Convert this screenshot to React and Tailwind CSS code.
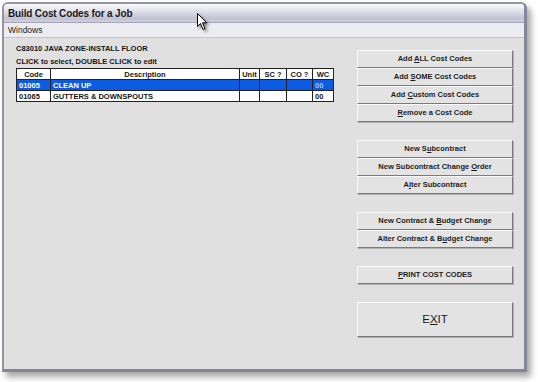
const sans = "font-['Liberation_Sans',Arial,sans-serif]";

function Btn({ children, tall }) {
  return (
    <button
      type="button"
      className={`flex w-full items-center justify-center border border-t-[#fafafa] border-l-[#fafafa] border-b-[#7a7a7a] border-r-[#7a7a7a] bg-[#e3e3e3] text-[#1c1c1c] shadow-[1px_1px_0_#b0b0b0] ${tall ? "h-[35px] text-[11.5px]" : "h-[18px] text-[7.5px] font-bold"}`}
    >
      <span>{children}</span>
    </button>
  );
}

const cols = [
  { label: "Code", w: "w-[34px]" },
  { label: "Description", w: "w-[189px]" },
  { label: "Unit", w: "w-[20px]" },
  { label: "SC ?", w: "w-[27px]" },
  { label: "CO ?", w: "w-[26px]" },
  { label: "WC", w: "w-[21px]" },
];

const rows = [
  { code: "01005", desc: "CLEAN UP", wc: "00", sel: true },
  { code: "01065", desc: "GUTTERS & DOWNSPOUTS", wc: "00", sel: false },
];

export default function App() {
  return (
    <div className={`relative h-[382px] w-[538px] overflow-hidden bg-white pl-[2px] pt-[2px] ${sans}`}>
      <div className="flex h-[370px] w-[525px] flex-col overflow-hidden rounded-t-[6px] border-2 border-r-[3px] border-b-[3px] border-[#9494a6] border-r-[#86869a] border-b-[#86869a] shadow-[4px_5px_6px_rgba(0,0,0,0.35)]">
        <div className="flex h-[18px] items-center bg-[linear-gradient(to_bottom,#fbfbfd,#dcdce6_45%,#c2c2d2_80%,#cfcfdc)] px-[4px] text-[10px] font-bold tracking-[-0.15px] text-[#1a1a24]">
          Build Cost Codes for a Job
        </div>
        <div className="flex h-[16px] items-center border-t border-b border-t-[#a4a4b6] border-b-[#c4c4ce] bg-[#ededf1] px-[4px] text-[8.5px] text-[#202020]">
          Windows
        </div>
        <div className="flex flex-1 bg-[#e0e0e0]">
          <div className="w-[353px] pl-[12px] pt-[4px]">
            <p className="text-[7.5px] font-bold leading-[13px] text-[#151515]">C83010 JAVA ZONE-INSTALL FLOOR</p>
            <p className="text-[7.5px] font-bold leading-[13px] text-[#151515]">CLICK to select, DOUBLE CLICK to edit</p>
            <table className="border-collapse text-[7.5px] font-bold">
              <thead>
                <tr className="h-[11px]">
                  {cols.map((c) => (
                    <th key={c.label} className={`${c.w} border border-[#222] bg-white p-0 text-center leading-[9px] text-[#151515]`}>
                      {c.label}
                    </th>
                  ))}
                </tr>
              </thead>
              <tbody>
                {rows.map((r) => (
                  <tr key={r.code} className={`h-[11px] ${r.sel ? "bg-[#0b5be3] text-white" : "bg-white text-[#151515]"}`}>
                    <td className="border border-[#222] px-[2px] py-0 leading-[9px]">{r.code}</td>
                    <td className="border border-[#222] px-[2px] py-0 leading-[9px]">{r.desc}</td>
                    <td className="border border-[#222] p-0"></td>
                    <td className="border border-[#222] p-0"></td>
                    <td className="border border-[#222] p-0"></td>
                    <td className={`border border-[#222] px-[2px] py-0 leading-[9px] ${r.sel ? "text-[#9cc6ff]" : ""}`}>{r.wc}</td>
                  </tr>
                ))}
              </tbody>
            </table>
          </div>
          <div className="flex w-[156px] flex-col pt-[12px]">
            <Btn>Add <u>A</u>LL Cost Codes</Btn>
            <Btn>Add <u>S</u>OME Cost Codes</Btn>
            <Btn>Add <u>C</u>ustom Cost Codes</Btn>
            <Btn><u>R</u>emove a Cost Code</Btn>
            <div className="h-[18px]" />
            <Btn>New S<u>u</u>bcontract</Btn>
            <Btn>New Subcontract Change <u>O</u>rder</Btn>
            <Btn>A<u>l</u>ter Subcontract</Btn>
            <div className="h-[18px]" />
            <Btn>New Contract &amp; <u>B</u>udget Change</Btn>
            <Btn>Alter Contract &amp; B<u>u</u>dget Change</Btn>
            <div className="h-[18px]" />
            <Btn><u>P</u>RINT COST CODES</Btn>
            <div className="h-[18px]" />
            <Btn tall>E<u>X</u>IT</Btn>
          </div>
        </div>
      </div>
      <svg className="absolute left-[197px] top-[13px] drop-shadow-[2px_2px_1.5px_rgba(0,0,0,0.45)]" width="12" height="18" viewBox="0 0 12 18">
        <path d="M0.5 0.5 L0.5 13.5 L3.5 10.5 L6 16.5 L8 15.5 L5.5 9.8 L9.8 9.8 Z" fill="white" stroke="black" strokeWidth="1" strokeLinejoin="round" />
      </svg>
    </div>
  );
}
